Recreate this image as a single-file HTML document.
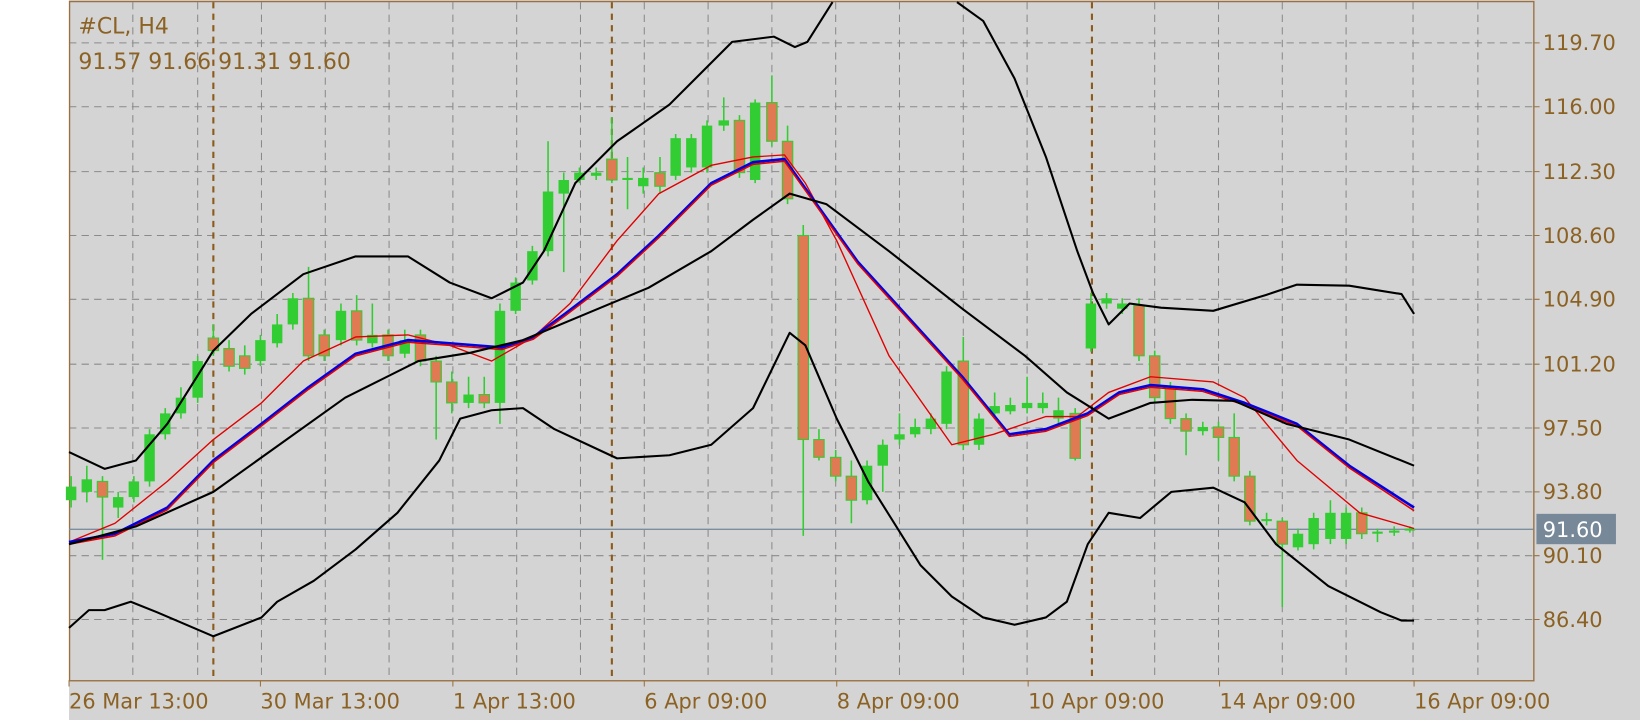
<!DOCTYPE html>
<html><head><meta charset="utf-8"><style>
html,body{margin:0;padding:0;background:#fff;width:1640px;height:720px;overflow:hidden}
svg{display:block}
text{font-family:"DejaVu Sans","Liberation Sans",sans-serif;fill:#8c6224;font-size:20px}
.g{fill:#32cd32}.r{fill:#e07a52;stroke:#32cd32;stroke-width:1}
</style></head><body>
<svg width="1640" height="720" viewBox="0 0 1568 688" preserveAspectRatio="none" xmlns="http://www.w3.org/2000/svg">
<rect x="66" y="0" width="1502" height="688" fill="#d4d4d4"/>
<g stroke="#8a8a8a" stroke-width="1" stroke-dasharray="7,5" fill="none">
<path d="M66 41H1466M66 102H1466M66 164H1466M66 225H1466M66 286H1466M66 348H1466M66 409H1466M66 470H1466M66 531H1466M66 592H1466"/>
<path d="M127 2V650M189 2V650M250 2V650M311 2V650M372 2V650M433 2V650M494 2V650M555 2V650M616 2V650M677 2V650M738 2V650M799 2V650M860 2V650M921 2V650M982 2V650M1104 2V650M1165 2V650M1226 2V650M1287 2V650M1351 2V650M1413 2V650"/>
</g>
<g stroke="#8c5a1a" stroke-width="2" stroke-dasharray="6,5"><path d="M204 2V650M585 2V650M1044 2V650"/></g>
<rect x="66.5" y="1.5" width="1400" height="649" fill="none" stroke="#9a7040" stroke-width="1.3"/>
<g stroke="#9a7040"><path d="M1466 41h6M1466 102h6M1466 164h6M1466 225h6M1466 286h6M1466 348h6M1466 409h6M1466 470h6M1466 531h6M1466 592h6M66 650v6M249 650v6M433 650v6M616 650v6M800 650v6M983 650v6M1166 650v6M1352 650v6"/></g>
<path d="M66 505.8H1466" stroke="#7a8ea0" stroke-width="1.3"/>
<path stroke="#32cd32" stroke-width="1.5" fill="none" d="M68 455V485M83 445V480M98 455V535M113 470V495M128 455V480M143 410V465M158 390V420M173 370V400M189 340V385M204 310V340M219 325V355M234 330V358M249 320V350M265 300V332M280 280V315M295 255V345M310 315V345M326 290V330M341 282V330M356 290V332M371 315V345M387 315V342M402 315V350M417 340V420M432 355V395M448 360V390M463 360V390M478 290V405M493 265V300M509 235V272M524 135V245M539 165V260M554 160V175M570 160V172M585 112V175M600 150V200M615 160V185M631 150V185M646 128V172M661 128V165M676 115V165M692 93V125M707 110V170M722 95V175M738 72V140M753 120V195M768 215V512M783 410V440M799 430V460M814 440V500M829 440V482M844 420V470M860 395V425M875 400V418M890 395V415M905 350V410M921 322V430M936 395V430M951 375V400M966 380V396M982 360V395M997 375V395M1012 380V405M1028 390V440M1043 280V336M1058 280V295M1073 285V300M1089 285V345M1104 335V385M1119 365V405M1134 395V435M1150 403V416M1165 403V440M1180 395V460M1195 450V502M1211 490V502M1226 495V580M1241 505V526M1256 490V525M1272 478V520M1287 485V520M1302 485V515M1317 505V518M1333 503V512M1348 503V509"/>
<g>
<rect class="g" x="63" y="465" width="10" height="13"/>
<rect class="g" x="78" y="458" width="10" height="12"/>
<rect class="r" x="93" y="460" width="10" height="15"/>
<rect class="g" x="108" y="475" width="10" height="10"/>
<rect class="g" x="123" y="460" width="10" height="15"/>
<rect class="g" x="138" y="415" width="10" height="45"/>
<rect class="g" x="153" y="395" width="10" height="20"/>
<rect class="g" x="168" y="380" width="10" height="15"/>
<rect class="g" x="184" y="345" width="10" height="35"/>
<rect class="r" x="199" y="323" width="10" height="12"/>
<rect class="r" x="214" y="333" width="10" height="17"/>
<rect class="r" x="229" y="340" width="10" height="12"/>
<rect class="g" x="244" y="325" width="10" height="20"/>
<rect class="g" x="260" y="310" width="10" height="18"/>
<rect class="g" x="275" y="285" width="10" height="25"/>
<rect class="r" x="290" y="285" width="10" height="55"/>
<rect class="r" x="305" y="320" width="10" height="20"/>
<rect class="g" x="321" y="297" width="10" height="28"/>
<rect class="r" x="336" y="297" width="10" height="28"/>
<rect class="g" x="351" y="320" width="10" height="8"/>
<rect class="r" x="366" y="320" width="10" height="20"/>
<rect class="g" x="382" y="325" width="10" height="13"/>
<rect class="r" x="397" y="320" width="10" height="25"/>
<rect class="r" x="412" y="345" width="10" height="20"/>
<rect class="r" x="427" y="365" width="10" height="20"/>
<rect class="g" x="443" y="377" width="10" height="8"/>
<rect class="r" x="458" y="377" width="10" height="8"/>
<rect class="g" x="473" y="297" width="10" height="88"/>
<rect class="g" x="488" y="270" width="10" height="27"/>
<rect class="g" x="504" y="240" width="10" height="28"/>
<rect class="g" x="519" y="183" width="10" height="57"/>
<rect class="g" x="534" y="172" width="10" height="13"/>
<rect class="g" x="549" y="165" width="10" height="7"/>
<rect class="g" x="565" y="165" width="10" height="3"/>
<rect class="r" x="580" y="152" width="10" height="20"/>
<rect class="g" x="595" y="170" width="10" height="2"/>
<rect class="g" x="610" y="170" width="10" height="8"/>
<rect class="r" x="626" y="165" width="10" height="13"/>
<rect class="g" x="641" y="132" width="10" height="36"/>
<rect class="g" x="656" y="132" width="10" height="28"/>
<rect class="g" x="671" y="120" width="10" height="40"/>
<rect class="g" x="687" y="115" width="10" height="5"/>
<rect class="r" x="702" y="115" width="10" height="50"/>
<rect class="g" x="717" y="98" width="10" height="74"/>
<rect class="r" x="733" y="98" width="10" height="37"/>
<rect class="r" x="748" y="135" width="10" height="55"/>
<rect class="r" x="763" y="225" width="10" height="195"/>
<rect class="r" x="778" y="420" width="10" height="17"/>
<rect class="r" x="794" y="437" width="10" height="18"/>
<rect class="r" x="809" y="455" width="10" height="23"/>
<rect class="g" x="824" y="445" width="10" height="33"/>
<rect class="g" x="839" y="425" width="10" height="20"/>
<rect class="g" x="855" y="415" width="10" height="5"/>
<rect class="g" x="870" y="408" width="10" height="7"/>
<rect class="g" x="885" y="400" width="10" height="10"/>
<rect class="g" x="900" y="355" width="10" height="50"/>
<rect class="r" x="916" y="345" width="10" height="80"/>
<rect class="g" x="931" y="400" width="10" height="25"/>
<rect class="g" x="946" y="388" width="10" height="7"/>
<rect class="g" x="961" y="387" width="10" height="6"/>
<rect class="g" x="977" y="385" width="10" height="5"/>
<rect class="g" x="992" y="385" width="10" height="5"/>
<rect class="g" x="1007" y="392" width="10" height="8"/>
<rect class="r" x="1023" y="395" width="10" height="43"/>
<rect class="g" x="1038" y="290" width="10" height="43"/>
<rect class="g" x="1053" y="285" width="10" height="5"/>
<rect class="g" x="1068" y="290" width="10" height="5"/>
<rect class="r" x="1084" y="292" width="10" height="48"/>
<rect class="r" x="1099" y="340" width="10" height="40"/>
<rect class="r" x="1114" y="370" width="10" height="30"/>
<rect class="r" x="1129" y="400" width="10" height="12"/>
<rect class="g" x="1145" y="408" width="10" height="4"/>
<rect class="r" x="1160" y="408" width="10" height="10"/>
<rect class="r" x="1175" y="418" width="10" height="37"/>
<rect class="r" x="1190" y="455" width="10" height="43"/>
<rect class="g" x="1206" y="496" width="10" height="2"/>
<rect class="r" x="1221" y="498" width="10" height="22"/>
<rect class="g" x="1236" y="510" width="10" height="13"/>
<rect class="g" x="1251" y="495" width="10" height="25"/>
<rect class="g" x="1267" y="490" width="10" height="25"/>
<rect class="g" x="1282" y="490" width="10" height="25"/>
<rect class="r" x="1297" y="490" width="10" height="20"/>
<rect class="g" x="1312" y="508" width="10" height="2"/>
<rect class="g" x="1328" y="507" width="10" height="2"/>
<rect class="g" x="1343" y="505" width="10" height="2"/>
</g>
<g fill="none" stroke-width="1.3" stroke-linejoin="round">
<polyline stroke="#e00000" points="66,518 110,500 160,460 204,420 250,385 290,345 340,322 390,320 430,330 470,345 510,322 545,290 590,230 630,185 680,158 720,150 750,148 770,175 800,230 850,340 910,425 950,415 1000,398 1030,398 1060,375 1100,360 1160,365 1190,380 1240,440 1300,490 1352,505"/>
<polyline stroke="#0000e0" stroke-width="2.5" points="66,518 110,510 160,485 204,440 250,405 295,370 340,338 390,325 430,328 480,332 510,322 540,300 590,262 630,225 680,175 720,155 750,152 770,180 820,250 870,305 920,360 965,415 1000,410 1040,395 1070,375 1100,368 1150,372 1190,385 1240,405 1290,445 1352,485"/>
<polyline stroke="#e00000" stroke-width="1.5" points="66,520 110,512 160,487 204,442 250,407 295,372 340,340 390,327 430,330 480,334 510,324 540,302 590,264 630,227 680,177 720,157 750,154 770,182 820,252 870,307 920,362 965,417 1000,412 1040,397 1070,377 1100,370 1150,374 1190,387 1240,407 1290,447 1352,488"/>
<g stroke="#000" stroke-width="2">
<polyline points="66,520 130,503 204,470 260,430 330,380 400,345 450,337 500,325 560,300 620,275 680,240 720,210 755,185 790,195 850,240 920,295 980,340 1020,375 1060,400 1100,385 1140,382 1180,383 1230,405 1290,420 1352,445"/>
<polyline points="66,432 100,448 130,440 160,405 204,335 240,300 290,262 340,245 390,245 430,270 470,285 500,270 520,240 550,175 590,135 640,100 700,40 740,35 760,45 772,40 796,2"/>
<polyline points="915,2 940,20 970,75 1000,150 1030,240 1045,280 1060,310 1080,290 1110,294 1160,297 1210,282 1240,272 1290,273 1340,281 1352,300"/>
<polyline points="66,600 85,583 100,583 125,575 150,585 204,608 250,590 265,575 300,555 340,525 380,490 420,440 440,400 470,392 500,390 530,410 590,438 640,435 680,425 720,390 755,318 770,330 800,400 830,460 880,540 910,570 940,590 970,597 1000,590 1020,575 1040,520 1060,490 1090,495 1120,470 1160,466 1190,480 1220,520 1270,560 1320,585 1340,593 1352,593"/>
</g></g>
<rect x="1469" y="491" width="76" height="29" fill="#778899"/>
<text x="1475" y="513" style="fill:#fff">91.60</text>
<g>
<text x="1475" y="48">119.70</text><text x="1475" y="109">116.00</text><text x="1475" y="171">112.30</text><text x="1475" y="232">108.60</text><text x="1475" y="293">104.90</text><text x="1475" y="355">101.20</text><text x="1475" y="416">97.50</text><text x="1475" y="477">93.80</text><text x="1475" y="538">90.10</text><text x="1475" y="599">86.40</text>
<text x="66" y="677">26 Mar 13:00</text><text x="249" y="677">30 Mar 13:00</text><text x="433" y="677">1 Apr 13:00</text><text x="616" y="677">6 Apr 09:00</text><text x="800" y="677">8 Apr 09:00</text><text x="983" y="677">10 Apr 09:00</text><text x="1166" y="677">14 Apr 09:00</text><text x="1352" y="677">16 Apr 09:00</text>
<text x="75" y="32" style="font-size:21px">#CL, H4</text><text x="75" y="66" style="font-size:21px">91.57 91.66 91.31 91.60</text>
</g>
</svg>
</body></html>
